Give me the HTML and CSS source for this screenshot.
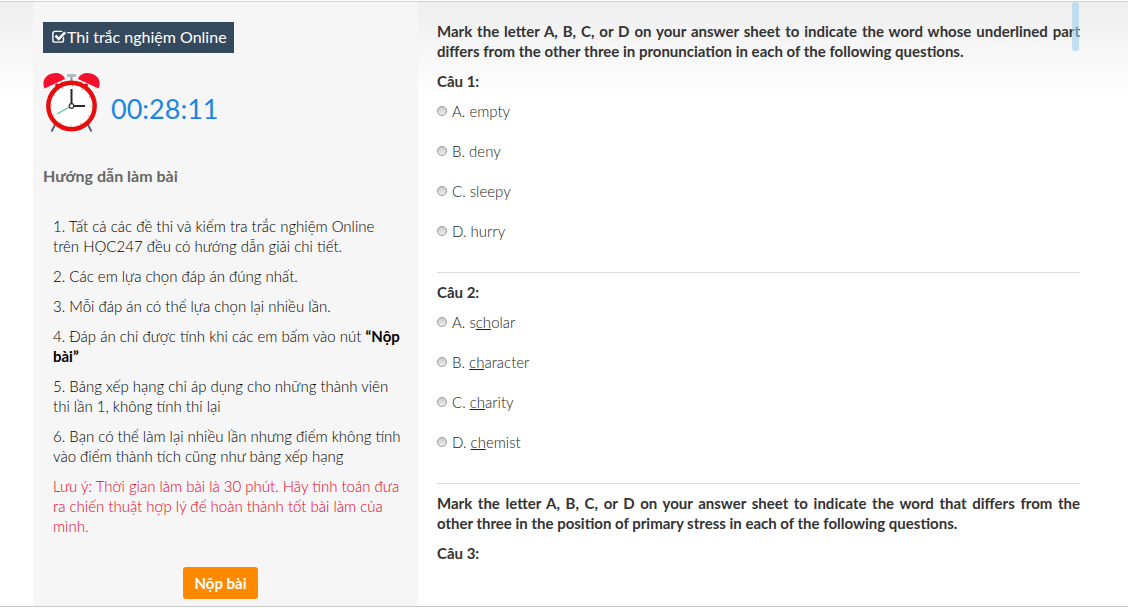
FILE: index.html
```html
<!DOCTYPE html>
<html lang="vi">
<head>
<meta charset="utf-8">
<meta name="viewport" content="width=device-width, initial-scale=1">
<title>Thi trắc nghiệm Online</title>
<link rel="stylesheet" href="styles.css">
</head>
<body>
<div class="page">
  <aside class="sidebar">
    <h1 class="badge">
      <svg class="badge-icon" viewBox="0 0 15 13" aria-hidden="true">
        <path d="M11.500 7.600v2.600a1.900 1.900 0 0 1-1.900 1.900H2.800A1.900 1.900 0 0 1 .9 10.200V3.300a1.900 1.900 0 0 1 1.900-1.900H9.800" fill="none" stroke="#fff" stroke-width="1.400" stroke-linecap="round"/>
        <path d="M3.500 5.600l3.200 3.200 6.500-6.500" fill="none" stroke="#fff" stroke-width="2.600"/>
      </svg><span>Thi trắc nghiệm Online</span>
    </h1>
    <div class="timer">
      <svg class="clock" viewBox="0 0 58 60" aria-hidden="true">
        <path d="M13 51L8.500 59.500M44 51L48.500 59.500" stroke="#59646b" stroke-width="2"/>
        <path d="M13 12l4 6M44 12l-4 6" stroke="#c20d1d" stroke-width="3"/>
        <path d="M1.500 16.500C-2.500 7 5 1 13 1c4 0 8 2.500 9 6z" fill="#f5102e"/>
        <path d="M55.500 16.500C59.500 7 52 1 44 1c-4 0-8 2.500-9 6z" fill="#f5102e"/>
        <path d="M28.500 4v7" stroke="#8b9498" stroke-width="2"/>
        <rect x="24" y="2" width="9" height="3" fill="#b4bbbe"/>
        <circle cx="28.500" cy="34" r="23.200" fill="#fff" stroke="#e80c0c" stroke-width="4.400"/>
        <circle cx="28.500" cy="34" r="20" fill="none" stroke="#999" stroke-width="1.500" stroke-dasharray="1 9.472"/>
        <path d="M26.500 35L14 42" stroke="#56c596" stroke-width="1.300"/>
        <path d="M28.500 32V17M31 34h11" stroke="#29292b" stroke-width="2"/>
        <circle cx="28.500" cy="34" r="2.300" fill="#fff" stroke="#333" stroke-width="1.200"/>
      </svg>
      <span class="time">00:28:11</span>
    </div>
    <h2 class="guide-title">Hướng dẫn làm bài</h2>
    <div class="guide">
      <p>1. Tất cả các đề thi và kiểm tra trắc nghiệm Online<br>trên HỌC247 đều có hướng dẫn giải chi tiết.</p>
      <p>2. Các em lựa chọn đáp án đúng nhất.</p>
      <p>3. Mỗi đáp án có thể lựa chọn lại nhiều lần.</p>
      <p>4. Đáp án chỉ được tính khi các em bấm vào nút <strong>“Nộp bài”</strong></p>
      <p>5. Bảng xếp hạng chỉ áp dụng cho những thành viên<br>thi lần 1, không tính thi lại</p>
      <p>6. Bạn có thể làm lại nhiều lần nhưng điểm không tính vào điểm thành tích cũng như bảng xếp hạng</p>
      <p class="note">Lưu ý: Thời gian làm bài là 30 phút. Hãy tính toán đưa ra chiến thuật hợp lý để hoàn thành tốt bài làm của mình.</p>
    </div>
    <button class="submit" type="button">Nộp bài</button>
  </aside>
  <main class="quiz">
    <p class="prompt">Mark the letter A, B, C, or D on your answer sheet to indicate the word whose underlined part differs from the other three in pronunciation in each of the following questions.</p>
    <fieldset class="question">
      <legend>Câu 1:</legend>
      <label><input type="radio" name="q1">A. empty</label>
      <label><input type="radio" name="q1">B. deny</label>
      <label><input type="radio" name="q1">C. sleepy</label>
      <label><input type="radio" name="q1">D. hurry</label>
    </fieldset>
    <fieldset class="question">
      <legend>Câu 2:</legend>
      <label><input type="radio" name="q2"><span>A. s<u>ch</u>olar</span></label>
      <label><input type="radio" name="q2"><span>B. <u>ch</u>aracter</span></label>
      <label><input type="radio" name="q2"><span>C. <u>ch</u>arity</span></label>
      <label><input type="radio" name="q2"><span>D. <u>ch</u>emist</span></label>
    </fieldset>
    <p class="prompt">Mark the letter A, B, C, or D on your answer sheet to indicate the word that differs from the other three in the position of primary stress in each of the following questions.</p>
    <p class="question-title">Câu 3:</p>
  </main>
  <div class="scroll-thumb"></div>
</div>
</body>
</html>
```
FILE: styles.css
```css
* { box-sizing: border-box; }
body {
  margin: 0;
  font: 300 15px/20px Lato, "Open Sans", sans-serif;
  color: #333;
  background: #fff;
}
.page {
  position: relative;
  display: grid;
  grid-template-columns: minmax(0, 385fr) minmax(0, 662fr);
  min-height: calc(100vh - 2px);
  margin-top: 1px;
  padding: 0 48px 0 33px;
  border-top: 1px solid #ccd3d1;
  border-bottom: 1px solid #c8c8c8;
  background: linear-gradient(#eee, #fff 96px);
}
.sidebar {
  display: flex;
  flex-direction: column;
  align-items: flex-start;
  padding: 20px 10px 7px;
  background: #f6f6f6;
}
h1, h2, p { margin: 0; }
.badge {
  display: flex;
  align-items: center;
  height: 31px;
  padding: 0 7px 2px 9px;
  font-size: 16px;
  font-weight: 400;
  color: #fff;
  background: #34495e;
}
.badge-icon { width: 15px; height: 13px; }
.timer {
  display: flex;
  align-items: center;
  gap: 10px;
  margin-top: 19px;
}
.clock { width: 58px; height: 60px; }
.time {
  padding-top: 14px;
  font-size: 27px;
  line-height: 32px;
  font-weight: 400;
  color: #1c86e0;
}
.guide-title {
  margin-top: 34px;
  font-size: 16px;
  font-weight: 700;
  color: #666;
}
.guide {
  display: grid;
  gap: 10px;
  margin-top: 30px;
  padding-left: 10px;
  color: #000;
}
.guide strong { font-weight: 700; }
.guide .note { color: #e8001f; }
.submit {
  align-self: center;
  height: 32px;
  margin: 31px 10px 0 0;
  padding: 0 11px;
  border: 0;
  border-radius: 3px;
  font: 700 15px/20px Lato, "Open Sans", sans-serif;
  color: #fff;
  background: #ff8a00;
}
.quiz { padding: 19px 0 0 19px; }
.prompt {
  margin-bottom: 10px;
  font-weight: 700;
  text-align: justify;
}
.question {
  display: grid;
  gap: 20px;
  min-width: 0;
  margin: 0 0 9px;
  padding: 0 0 31px;
  border: 0;
  border-bottom: 1px solid #ddd;
}
.question legend {
  padding: 0;
  margin-bottom: 10px;
}
.question legend, .question-title { font-weight: 700; }
.question label {
  display: flex;
  align-items: center;
  gap: 5px;
  color: #222;
}
.question input {
  appearance: none;
  width: 10px;
  height: 10px;
  margin: 0;
  border: 1px solid #999;
  border-radius: 50%;
  background: linear-gradient(#ccc, #eee);
}
.scroll-thumb {
  position: absolute;
  top: 0;
  right: 49px;
  width: 7px;
  height: 49px;
  border-radius: 3px;
  background: rgba(160, 208, 240, 0.6);
}
```
